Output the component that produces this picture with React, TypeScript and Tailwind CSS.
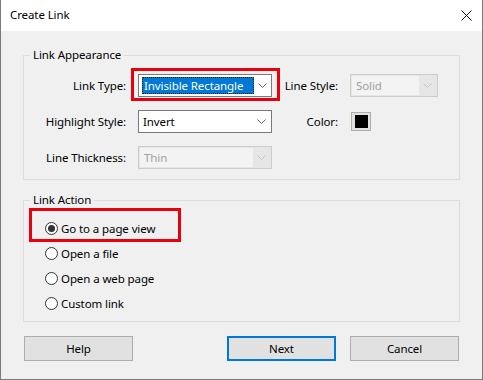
import React from "react";

const Chevron = ({ disabled }: { disabled?: boolean }) => (
  <svg width="9" height="5" viewBox="0 0 9 5" className="block">
    <path d="M0.5 0.5 L4.5 4.5 L8.5 0.5" fill="none" stroke={disabled ? "#c4c4c4" : "#606060"} strokeWidth="1" />
  </svg>
);

function Combo({
  value,
  width,
  disabled,
  selected,
}: {
  value: string;
  width: string;
  disabled?: boolean;
  selected?: boolean;
}) {
  return (
    <div
      className={`flex h-[23px] items-stretch border ${
        disabled ? "border-[#cccccc] bg-[#e6e6e6]" : "border-[#7a7a7a] bg-white"
      } ${width}`}
    >
      <div className={`flex flex-1 items-center ${disabled ? "bg-[#f3f3f3] m-[1px] mr-0" : ""}`}>
        {selected ? (
          <div className="ml-[3px] flex h-[17px] w-[112px] items-center border border-dotted border-[#1e1e1e] bg-[#0078d7] pl-[1px] text-white">
            {value}
          </div>
        ) : (
          <span className={`pl-[4px] ${disabled ? "text-[#a0a0a0]" : "text-black"}`}>{value}</span>
        )}
      </div>
      <div className="flex w-[18px] items-center justify-center pr-[1px]">
        <Chevron disabled={disabled} />
      </div>
    </div>
  );
}

function Radio({ label, checked }: { label: string; checked?: boolean }) {
  return (
    <div className="flex h-[25px] items-center">
      <div className="flex h-[13px] w-[13px] items-center justify-center rounded-full border border-[#333333] bg-white">
        {checked && <div className="h-[7px] w-[7px] rounded-full bg-[#333333]" />}
      </div>
      <span className="ml-[3px]">{label}</span>
    </div>
  );
}

function Button({ label, focused }: { label: string; focused?: boolean }) {
  return (
    <div
      className={`flex h-[25px] w-[109px] items-center justify-center bg-[#e1e1e1] ${
        focused ? "border-2 border-[#0078d7]" : "border border-[#adadad]"
      }`}
    >
      {label}
    </div>
  );
}

export default function App() {
  return (
    <div
      className="flex h-[380px] w-[483px] flex-col border-x border-b border-[#7a7a7a] bg-[#f0f0f0] text-[11.5px] tracking-[-0.1px] text-black"
      style={{ fontFamily: '"Noto Sans", "Open Sans", sans-serif' }}
    >
      {/* Title bar */}
      <div className="flex h-[31px] items-center justify-between bg-white pl-[9px] pr-[9px]">
        <span className="pb-[1px]">Create Link</span>
        <svg width="11" height="11" viewBox="0 0 11 11" className="mr-[1px]">
          <path d="M0.5 0.5 L10.5 10.5 M10.5 0.5 L0.5 10.5" stroke="#111" strokeWidth="1" />
        </svg>
      </div>

      {/* Link Appearance */}
      <div className="relative mx-[22px] mt-[24px] h-[125px] border border-[#dcdcdc] pt-[18px]">
        <span className="absolute left-[6px] top-[-9px] bg-[#f0f0f0] px-[3px] leading-[16px]">Link Appearance</span>
        <div className="grid grid-cols-[102px_146px_66px_auto] items-center gap-y-[13px] whitespace-nowrap">
          <span className="text-right">Link Type:</span>
          <div className="relative ml-[12px] w-[134px]">
            <Combo value="Invisible Rectangle" width="w-[134px]" selected />
            <div className="pointer-events-none absolute left-[-7px] right-[-8px] top-[-6px] bottom-[-4px] border-[3px] border-[#e8000d]" />
          </div>
          <span className="text-right">Line Style:</span>
          <div className="ml-[12px]">
            <Combo value="Solid" width="w-[88px]" disabled />
          </div>

          <span className="text-right">Highlight Style:</span>
          <div className="ml-[12px]">
            <Combo value="Invert" width="w-[134px]" />
          </div>
          <span className="text-right">Color:</span>
          <div className="ml-[13px] flex h-[19px] w-[20px] items-center justify-center border border-[#adadad] bg-[#e1e1e1]">
            <div className="h-[13px] w-[13px] bg-black" />
          </div>

          <span className="text-right">Line Thickness:</span>
          <div className="ml-[12px]">
            <Combo value="Thin" width="w-[134px]" disabled />
          </div>
          <span />
          <span />
        </div>
      </div>

      {/* Link Action */}
      <div className="relative mx-[22px] mt-[20px] h-[122px] border border-[#dcdcdc] pl-[21px] pt-[15px]">
        <span className="absolute left-[6px] top-[-9px] bg-[#f0f0f0] px-[3px] leading-[16px]">Link Action</span>
        <div className="relative">
          <Radio label="Go to a page view" checked />
          <div className="pointer-events-none absolute left-[-16px] top-[-8px] h-[34px] w-[152px] border-[3px] border-[#e8000d]" />
        </div>
        <Radio label="Open a file" />
        <Radio label="Open a web page" />
        <Radio label="Custom link" />
      </div>

      {/* Buttons */}
      <div className="mx-[23px] mt-[14px] flex items-center">
        <Button label="Help" />
        <div className="flex-1" />
        <Button label="Next" focused />
        <div className="w-[14px]" />
        <Button label="Cancel" />
      </div>
    </div>
  );
}
